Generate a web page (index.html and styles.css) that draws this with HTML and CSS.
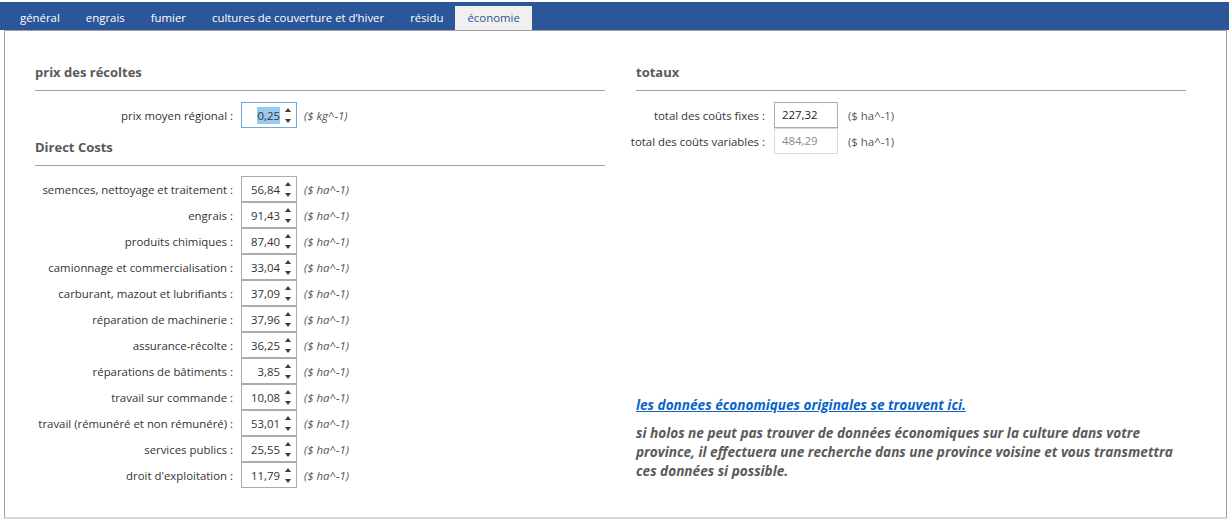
FILE: index.html
```html
<!DOCTYPE html>
<html lang="fr">
<head>
<meta charset="utf-8">
<title>économie</title>
<link rel="stylesheet" href="styles.css">
</head>
<body>
<nav class="tabs">
  <span class="tab">général</span>
  <span class="tab">engrais</span>
  <span class="tab">fumier</span>
  <span class="tab">cultures de couverture et d’hiver</span>
  <span class="tab">résidu</span>
  <span class="tab active">économie</span>
</nav>
<main class="panel">
  <section class="col">
    <h2 class="section-title">prix des récoltes</h2>
    <div class="form">
      <div class="row">
        <span class="label">prix moyen régional :</span>
        <span class="spin focus"><span class="val"><span class="sel">0,25</span></span><span class="arrows"></span></span>
        <span class="unit">($ kg^-1)</span>
      </div>
    </div>
    <h2 class="section-title second">Direct Costs</h2>
    <div class="form">
      <div class="row"><span class="label">semences, nettoyage et traitement :</span><span class="spin"><span class="val">56,84</span><span class="arrows"></span></span><span class="unit">($ ha^-1)</span></div>
      <div class="row"><span class="label">engrais :</span><span class="spin"><span class="val">91,43</span><span class="arrows"></span></span><span class="unit">($ ha^-1)</span></div>
      <div class="row"><span class="label">produits chimiques :</span><span class="spin"><span class="val">87,40</span><span class="arrows"></span></span><span class="unit">($ ha^-1)</span></div>
      <div class="row"><span class="label">camionnage et commercialisation :</span><span class="spin"><span class="val">33,04</span><span class="arrows"></span></span><span class="unit">($ ha^-1)</span></div>
      <div class="row"><span class="label">carburant, mazout et lubrifiants :</span><span class="spin"><span class="val">37,09</span><span class="arrows"></span></span><span class="unit">($ ha^-1)</span></div>
      <div class="row"><span class="label">réparation de machinerie :</span><span class="spin"><span class="val">37,96</span><span class="arrows"></span></span><span class="unit">($ ha^-1)</span></div>
      <div class="row"><span class="label">assurance-récolte :</span><span class="spin"><span class="val">36,25</span><span class="arrows"></span></span><span class="unit">($ ha^-1)</span></div>
      <div class="row"><span class="label">réparations de bâtiments :</span><span class="spin"><span class="val">3,85</span><span class="arrows"></span></span><span class="unit">($ ha^-1)</span></div>
      <div class="row"><span class="label">travail sur commande :</span><span class="spin"><span class="val">10,08</span><span class="arrows"></span></span><span class="unit">($ ha^-1)</span></div>
      <div class="row"><span class="label">travail (rémunéré et non rémunéré) :</span><span class="spin"><span class="val">53,01</span><span class="arrows"></span></span><span class="unit">($ ha^-1)</span></div>
      <div class="row"><span class="label">services publics :</span><span class="spin"><span class="val">25,55</span><span class="arrows"></span></span><span class="unit">($ ha^-1)</span></div>
      <div class="row"><span class="label">droit d'exploitation :</span><span class="spin"><span class="val">11,79</span><span class="arrows"></span></span><span class="unit">($ ha^-1)</span></div>
    </div>
  </section>
  <section class="col right">
    <h2 class="section-title">totaux</h2>
    <div class="form totals">
      <div class="trow"><span class="tlabel">total des coûts fixes :</span><span class="tbox">227,32</span><span class="tunit">($ ha^-1)</span></div>
      <div class="trow"><span class="tlabel">total des coûts variables :</span><span class="tbox disabled">484,29</span><span class="tunit">($ ha^-1)</span></div>
    </div>
    <div class="notes">
      <a class="link" href="#">les données économiques originales se trouvent ici.</a>
      <p class="note">si holos ne peut pas trouver de données économiques sur la culture dans votre<br>province, il effectuera une recherche dans une province voisine et vous transmettra<br>ces données si possible.</p>
    </div>
  </section>
</main>
</body>
</html>
```

FILE: styles.css
```css
* { box-sizing: border-box; }
html, body { margin: 0; padding: 0; background: #ffffff; }
body {
  width: 1229px;
  height: 523px;
  padding-top: 2px;
  font-family: "Open Sans", "Noto Sans", sans-serif;
  font-size: 11.4px;
  color: #333333;
  overflow: hidden;
}

.tabs {
  display: flex;
  align-items: flex-end;
  height: 28px;
  padding-left: 7px;
  background: #2b579a;
}
.tab {
  height: 24px;
  line-height: 23px;
  padding: 0 13px;
  color: #ffffff;
  white-space: nowrap;
}
.tab.active {
  padding: 0 12px;
  margin-left: -1px;
  background: #f0f0f0;
  color: #2b579a;
}

.panel {
  display: grid;
  grid-template-columns: 570px 550px;
  column-gap: 31px;
  align-items: stretch;
  height: 489px;
  margin: 0 2px 0 4px;
  padding: 33px 0 0 30px;
  border: 1px solid #a0a0a0;
  border-bottom: 2px solid #dadada;
}

.col { display: flex; flex-direction: column; }

.section-title {
  margin: 0 0 11px;
  padding-bottom: 10px;
  border-bottom: 1px solid #a0a0a0;
  font-size: 13px;
  line-height: 16px;
  font-weight: 700;
  color: #595959;
}
.section-title.second { margin-top: 11px; margin-bottom: 10px; }

.form { display: flex; flex-direction: column; }

.row {
  display: grid;
  grid-template-columns: 198px 57px auto;
  column-gap: 7px;
  align-items: center;
  height: 26px;
}
.row .spin { margin-left: 1px; }
.label {
  text-align: right;
  white-space: nowrap;
}
.spin {
  position: relative;
  display: flex;
  align-items: center;
  justify-content: flex-end;
  height: 26px;
  padding-right: 16px;
  border: 1px solid #acacac;
  background: #ffffff;
}
.spin.focus { border-color: #6fa8e3; }
.val { line-height: 17px; color: #333333; }
.sel { background: #99c9ef; padding: 1px 0 1px 1px; color: #333333; }
.arrows {
  position: absolute;
  right: 5px;
  top: 0;
  width: 6px;
  height: 100%;
}
.arrows::before, .arrows::after {
  content: "";
  position: absolute;
  left: 0;
  border-left: 3px solid transparent;
  border-right: 3px solid transparent;
}
.arrows::before { top: 5px; border-bottom: 4px solid #3a3a3a; }
.arrows::after { bottom: 4px; border-top: 4px solid #3a3a3a; }
.unit {
  font-style: italic;
  color: #555555;
  white-space: nowrap;
}

.trow {
  display: grid;
  grid-template-columns: 129px 64px auto;
  column-gap: 9px;
  align-items: center;
  height: 26px;
}
.trow .tunit { margin-left: 1px; }
.tlabel {
  display: flex;
  justify-content: flex-end;
  white-space: nowrap;
}
.tbox {
  height: 26px;
  line-height: 24px;
  padding-left: 7px;
  border: 1px solid #acacac;
  color: #222222;
}
.tbox.disabled { border-color: #d9d9d9; color: #8a8a8a; }
.tunit { color: #555555; white-space: nowrap; }

.notes {
  margin-top: auto;
  padding-bottom: 37px;
  font-family: "Open Sans", "Noto Sans", sans-serif;
  font-weight: 700;
  font-style: italic;
  font-size: 13.6px;
}
.link {
  display: block;
  line-height: 19px;
  color: #0a63c9;
  text-decoration: underline;
}
.note {
  margin: 9px 0 0;
  line-height: 19px;
  color: #5a5a5a;
}
```
